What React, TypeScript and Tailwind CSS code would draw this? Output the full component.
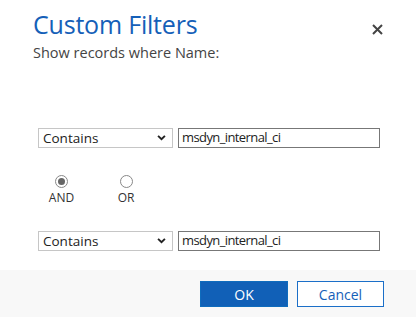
import React from "react";

function FilterRow() {
  return (
    <div className="flex items-center pl-[38px]">
      <div className="relative flex h-[20px] w-[135px] items-center border border-[#c6c6c6] bg-white pl-[4px] text-[13.5px] text-[#222]">
        <span>Contains</span>
        <svg viewBox="0 0 10 7" className="absolute right-[6px] top-[6px] h-[6px] w-[9px]" fill="none" stroke="#222" strokeWidth="2.2">
          <path d="M1 1l4 4 4-4" />
        </svg>
      </div>
      <div className="ml-[5px] flex h-[20px] w-[202px] items-center border border-[#777] bg-white pl-[3px] text-[13px] tracking-[-0.6px] text-[#222]">
        msdyn_internal_ci
      </div>
    </div>
  );
}

function Radio({ label, checked }: { label: string; checked?: boolean }) {
  return (
    <div className="flex flex-col items-center">
      <span className="flex h-[13px] w-[13px] items-center justify-center rounded-full border border-[#888] bg-white">
        {checked ? <span className="h-[7px] w-[7px] rounded-full bg-[#666]" /> : null}
      </span>
      <span className="mt-[3px] text-[12px] leading-[14px] text-[#333]">{label}</span>
    </div>
  );
}

export default function App() {
  return (
    <div className="relative flex h-[317px] w-[416px] flex-col bg-white font-['Open_Sans',sans-serif]">
      <div className="pl-[33px] pt-[8px]">
        <h1 className="text-[25px] leading-[32px] tracking-[-0.2px] text-[#1560b8]">Custom Filters</h1>
        <p className="mt-[3px] text-[14.5px] leading-[20px] text-[#444]">Show records where Name:</p>
      </div>
      <button className="absolute right-[33px] top-[24px] flex h-[11px] w-[11px] items-center justify-center">
        <svg viewBox="0 0 11 11" className="h-[11px] w-[11px]" stroke="#444" strokeWidth="2">
          <path d="M1 1l9 9M10 1l-9 9" />
        </svg>
      </button>

      <div className="mt-[65px]">
        <FilterRow />
      </div>

      <div className="mt-[27px] flex pl-[48px]">
        <div className="w-[27px]">
          <Radio label="AND" checked />
        </div>
        <div className="ml-[42px] w-[18px]">
          <Radio label="OR" />
        </div>
      </div>

      <div className="mt-[26px]">
        <FilterRow />
      </div>

      <div className="mt-auto flex h-[47px] items-start justify-end gap-[9px] bg-[#f8f8f8] pr-[32px] pt-[11px]">
        <button className="h-[26px] w-[88px] border border-[#0f6cbd] bg-[#1160b7] text-[14px] text-white">OK</button>
        <button className="h-[26px] w-[87px] border border-[#1b6fc8] bg-white text-[14px] text-[#1560b8]">Cancel</button>
      </div>
    </div>
  );
}
